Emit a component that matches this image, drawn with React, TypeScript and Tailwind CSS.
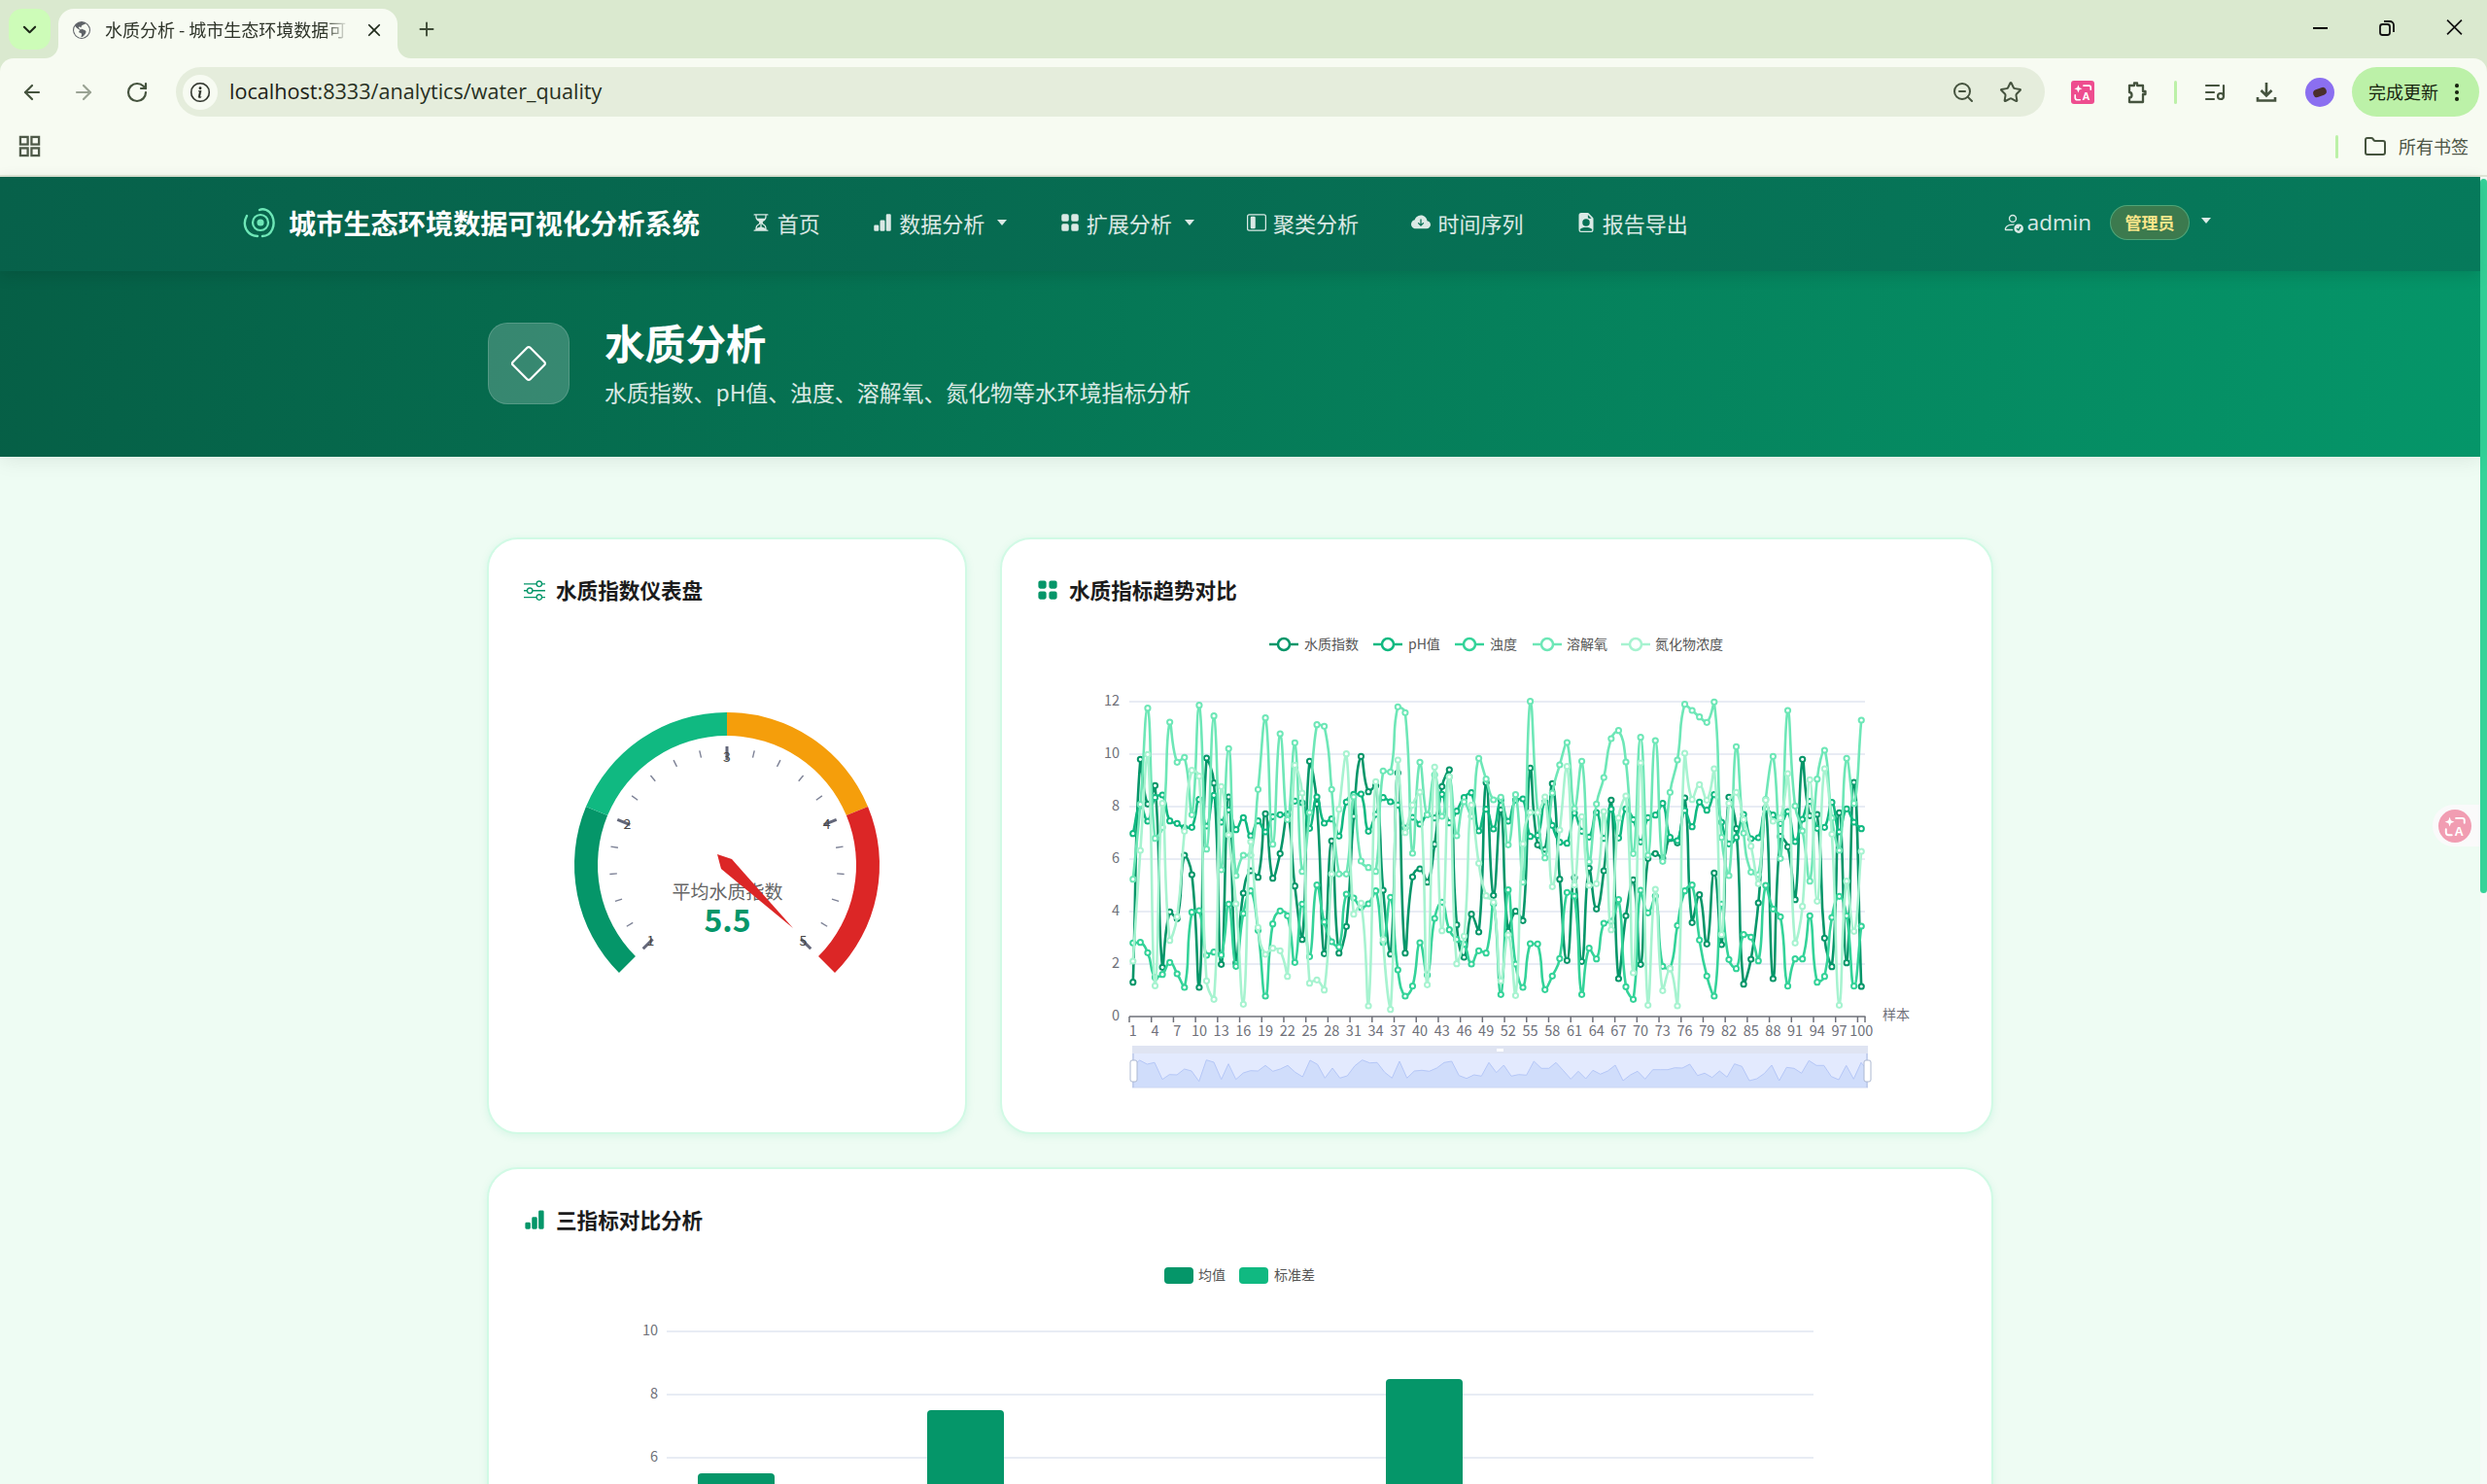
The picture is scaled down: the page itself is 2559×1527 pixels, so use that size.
import React from "react";
import {
  BsHourglassSplit, BsBarChartFill, BsGridFill, BsLayoutSidebarInset, BsCloudArrowDownFill,
  BsFileEarmarkPersonFill, BsPersonCheck, BsDiamond, BsSliders, BsGlobeAmericas, BsChevronDown,
  BsX, BsPlus, BsInfoCircle, BsThreeDotsVertical,
} from "react-icons/bs";
import { ArrowLeft, ArrowRight, RotateCw, ZoomOut, Star, ListMusic, Folder } from "lucide-react";

const S1 = [902,214,352,295,856,685,706,510,570,918,210,287,847,330,842,627,558,578,382,581,505,383,605,770,220,352,814,466,812,730,390,205,314,295,618,815,256,812,577,552,593,476,298,246,725,825,692,747,286,634,370,745,683,712,241,478,492,289,584,835,579,838,550,676,558,340,891,697,586,847,520,505,519,458,472,333,718,632,784,565,786,331,428,908,831,657,365,891,452,484,647,214,388,384,766,854,379,842,285,915];
const S2 = [443,354,405,332,324,404,412,425,424,338,420,325,408,370,431,394,450,404,438,391,385,385,343,348,427,330,411,398,451,346,322,321,436,384,332,345,355,426,393,414,385,395,322,410,374,332,317,435,368,429,340,405,340,336,452,449,345,418,470,473,380,436,454,378,458,368,457,367,400,469,394,386,350,455,465,372,422,346,371,323,408,475,455,384,459,456,367,386,412,375,468,399,344,427,424,347,438,367,408,428];
const S3 = [781,779,811,887,878,841,876,918,686,681,819,809,818,661,853,690,620,742,945,722,682,697,841,661,823,602,716,777,793,630,642,671,660,620,780,640,864,945,914,780,880,705,655,740,770,785,846,805,812,660,940,617,846,918,783,784,925,883,829,625,636,940,797,830,720,714,647,916,955,618,688,636,853,860,727,620,602,772,883,945,661,832,860,755,763,836,603,676,700,914,830,830,697,902,884,702,637,697,914,729];
const S4 = [584,353,56,458,424,99,223,208,385,47,491,80,555,181,573,510,510,307,86,476,135,400,163,560,378,107,112,307,568,568,330,528,548,560,250,253,52,70,504,223,385,262,390,268,450,345,390,211,275,339,331,478,323,593,35,378,518,318,231,162,366,220,530,352,270,150,125,222,505,146,510,156,529,316,216,44,63,83,100,37,455,573,175,442,562,570,338,205,520,63,358,435,590,275,186,395,495,211,350,93];
const S5 = [837,495,199,913,350,773,700,436,248,266,898,955,298,447,660,970,468,733,816,797,805,884,232,318,905,895,926,568,368,197,692,658,975,283,770,986,216,440,355,315,910,238,743,268,845,760,355,535,635,655,898,756,943,475,378,378,330,607,432,236,602,391,603,598,375,740,395,327,873,225,973,615,928,860,975,195,338,292,340,243,755,350,316,400,482,598,340,405,395,258,781,668,277,652,243,445,973,590,745,498];

const seriesList = [
  { name: "水质指数", color: "#059669", data: S1 },
  { name: "pH值", color: "#10b981", data: S2 },
  { name: "浊度", color: "#34d399", data: S3 },
  { name: "溶解氧", color: "#6ee7b7", data: S4 },
  { name: "氮化物浓度", color: "#a7f3d0", data: S5 },
];

const px = (i: number) => 1165.8 + 7.57 * i;
const py = (zy: number) => 710 + zy / 3;

function smoothPath(pts: number[][]) {
  const s = 0.5;
  const cps = pts.map((p, i) => {
    const prev = pts[Math.max(0, i - 1)];
    const next = pts[Math.min(pts.length - 1, i + 1)];
    const vx = next[0] - prev[0];
    const vy = next[1] - prev[1];
    const a = Math.hypot(p[0] - prev[0], p[1] - prev[1]);
    const b = Math.hypot(next[0] - p[0], next[1] - p[1]);
    const r = a + b > 0 ? b / (a + b) : 0.5;
    const clamp = (v: number, l: number, h: number) => Math.max(Math.min(l, h), Math.min(Math.max(l, h), v));
    const inP = [p[0] - vx * s * (1 - r), clamp(p[1] - vy * s * (1 - r), p[1], prev[1])];
    const outP = [p[0] + vx * s * r, clamp(p[1] + vy * s * r, p[1], next[1])];
    return { inP, outP };
  });
  let d = `M${pts[0][0].toFixed(1)} ${pts[0][1].toFixed(1)}`;
  for (let i = 1; i < pts.length; i++) {
    const a = cps[i - 1].outP;
    const b = cps[i].inP;
    d += `C${a[0].toFixed(1)} ${a[1].toFixed(1)} ${b[0].toFixed(1)} ${b[1].toFixed(1)} ${pts[i][0].toFixed(1)} ${pts[i][1].toFixed(1)}`;
  }
  return d;
}

const mini7 = [[196,590],[218,573],[241,585],[264,580],[288,632],[310,617],[333,618],[356,600],[378,606],[401,638],[424,572],[447,579],[470,632],[492,584],[515,632],[538,612],[560,605],[583,606],[606,589],[629,607],[652,600],[675,589],[698,610],[721,624],[744,573],[767,586],[790,628],[813,597],[836,628],[859,621],[882,590],[905,572],[928,581],[951,580],[974,610],[997,628],[1020,576],[1043,628],[1066,606],[1089,604],[1112,607],[1135,597],[1158,580],[1181,576],[1204,620],[1227,629],[1250,618],[1273,622],[1296,580],[1319,611],[1342,588]];
const mini8 = [[15,622],[38,617],[62,619],[85,576],[108,598],[131,598],[153,580],[176,605],[199,631],[222,607],[245,630],[267,604],[290,616],[313,606],[336,588],[360,636],[383,618],[405,607],[428,631],[452,602],[475,602],[498,602],[520,596],[543,597],[566,585],[590,620],[612,613],[635,626],[658,606],[681,625],[704,584],[727,592],[750,636],[773,630],[796,614],[819,588],[842,636],[865,595],[888,598],[911,613],[934,574],[957,589],[980,589],[1003,623],[1026,633],[1049,589],[1072,631],[1095,580],[1111,600]];
const miniPts = [
  ...mini7.map(([x, y]) => [1100 + x / 3, 900 + y / 3]),
  ...mini8.map(([x, y]) => [1550 + x / 3, 900 + y / 3]),
];
const miniLine = miniPts.map((p, i) => `${i ? "L" : "M"}${p[0].toFixed(1)} ${p[1].toFixed(1)}`).join("");

function LineChart() {
  const ylabels = [0, 2, 4, 6, 8, 10, 12];
  const yOf = (v: number) => 1046 - v * 27;
  const xlabels: number[] = [];
  for (let i = 0; i < 100; i += 3) xlabels.push(i);
  return (
    <svg viewBox="1031 640 1018 525" className="block w-[1018px] h-[525px]" fill="none">
      {[
        { x: 1306, tx: 1342, s: seriesList[0] },
        { x: 1413, tx: 1449, s: seriesList[1] },
        { x: 1497, tx: 1533, s: seriesList[2] },
        { x: 1577, tx: 1612, s: seriesList[3] },
        { x: 1668, tx: 1703, s: seriesList[4] },
      ].map(({ x, tx, s }) => (
        <g key={s.name}>
          <line x1={x} x2={x + 30} y1={663} y2={663} stroke={s.color} strokeWidth={2.5} />
          <circle cx={x + 15} cy={663} r={6} fill="#fff" stroke={s.color} strokeWidth={2.5} />
          <text x={tx} y={668} fontSize={14} fill="#555">{s.name}</text>
        </g>
      ))}
      {ylabels.map((v) => (
        <g key={v}>
          {v > 0 && <line x1={1162} x2={1919} y1={yOf(v)} y2={yOf(v)} stroke="#e0e6f1" strokeWidth={1.5} />}
          <text x={1152} y={yOf(v) + 3.5} textAnchor="end" fontSize={14.5} fill="#6e7079">{v}</text>
        </g>
      ))}
      <line x1={1162} x2={1919.5} y1={1046} y2={1046} stroke="#6e7079" strokeWidth={1.5} />
      {xlabels.map((i) => (
        <g key={i}>
          <line x1={1162 + 7.57 * i} x2={1162 + 7.57 * i} y1={1046} y2={1052} stroke="#6e7079" strokeWidth={1.5} />
          <text x={px(i)} y={1066} textAnchor="middle" fontSize={14.5} fill="#6e7079">{i + 1}</text>
        </g>
      ))}
      <line x1={1919} x2={1919} y1={1046} y2={1052} stroke="#6e7079" strokeWidth={1.5} />
      <text x={1937} y={1049} fontSize={14} fill="#6e7079">样本</text>
      {seriesList.map((s) => {
        const pts = s.data.map((v, i) => [px(i), py(v)]);
        return (
          <g key={s.name}>
            <path d={smoothPath(pts)} stroke={s.color} strokeWidth={2.6} strokeLinejoin="round" />
            {pts.map((p, i) => (
              <circle key={i} cx={p[0]} cy={p[1]} r={2.6} fill="#fff" stroke={s.color} strokeWidth={2} />
            ))}
          </g>
        );
      })}
      <rect x={1165} y={1076} width={757} height={43} fill="#e3eafe" />
      <rect x={1165} y={1076} width={757} height={8} fill="#dfe4f2" />
      <path d={`M1165 1119L${miniPts[0][0]} ${miniPts[0][1]}${miniLine.replace(/^M[^L]*/, "")}L1922 1119Z`} fill="#d0ddfb" />
      <path d={miniLine} stroke="#b5c7f7" strokeWidth={1} />
      <line x1={1165} x2={1922} y1={1119} y2={1119} stroke="#ccd6f2" strokeWidth={1} />
      <line x1={1166} x2={1166} y1={1084} y2={1119} stroke="#bcc8e8" strokeWidth={1.5} />
      <line x1={1921} x2={1921} y1={1084} y2={1119} stroke="#bcc8e8" strokeWidth={1.5} />
      <rect x={1163} y={1091} width={7} height={22} rx={2} fill="#fff" stroke="#acb8d1" strokeWidth={1} />
      <rect x={1918} y={1091} width={7} height={22} rx={2} fill="#fff" stroke="#acb8d1" strokeWidth={1} />
      <rect x={1540} y={1079} width={7} height={3} fill="#fff" />
    </svg>
  );
}

function Gauge() {
  const cx = 748;
  const cy = 890;
  const pt = (r: number, a: number) => {
    const t = (a * Math.PI) / 180;
    return [cx + r * Math.cos(t), cy - r * Math.sin(t)];
  };
  const arc = (a0: number, a1: number) => {
    const R = 157;
    const r = 133;
    const p0 = pt(R, a0);
    const p1 = pt(R, a1);
    const p2 = pt(r, a1);
    const p3 = pt(r, a0);
    return `M${p0[0]} ${p0[1]}A${R} ${R} 0 0 1 ${p1[0]} ${p1[1]}L${p2[0]} ${p2[1]}A${r} ${r} 0 0 0 ${p3[0]} ${p3[1]}Z`;
  };
  const ticks: React.ReactNode[] = [];
  for (let i = 0; i <= 20; i++) {
    const a = 225 - i * 13.5;
    const major = i % 5 === 0;
    const p0 = pt(major ? 122 : 121, a);
    const p1 = pt(major ? 108 : 113.5, a);
    ticks.push(
      <line key={i} x1={p0[0]} y1={p0[1]} x2={p1[0]} y2={p1[1]} stroke={major ? "#63677a" : "#7d8296"} strokeWidth={major ? 3 : 1.4} />
    );
  }
  const labels = [1, 2, 3, 4, 5].map((v, i) => {
    const p = pt(111, 225 - i * 67.5);
    return (
      <text key={v} x={p[0]} y={p[1] + 5} textAnchor="middle" fontSize={14} fill="#464646">{v}</text>
    );
  });
  return (
    <svg viewBox="503 640 490 525" className="block w-[490px] h-[525px]" fill="none">
      <path d={arc(225, 157.5)} fill="#059669" />
      <path d={arc(157.5, 90)} fill="#10b981" />
      <path d={arc(90, 22.5)} fill="#f59e0b" />
      <path d={arc(22.5, -45)} fill="#dc2626" />
      {ticks}
      {labels}
      <text x={748.5} y={925} textAnchor="middle" fontSize={19} fill="#666">平均水质指数</text>
      <text x={748.5} y={959} textAnchor="middle" fontSize={32} fontWeight={700} fill="#059669">5.5</text>
      <polygon points="738,879 753,884 816,955 742,894" fill="#dc2626" />
    </svg>
  );
}

function BarChart() {
  const yOf = (v: number) => 1370 + (10 - v) * 32.5;
  const bars = [
    [718, 1516],
    [954, 1451],
    [1426, 1419],
  ];
  return (
    <svg viewBox="503 1288 1546 330" className="block w-[1546px] h-[330px]" fill="none">
      <rect x={1198} y={1304} width={30} height={17} rx={4} fill="#059669" />
      <text x={1233} y={1317} fontSize={14} fill="#555">均值</text>
      <rect x={1275} y={1304} width={30} height={17} rx={4} fill="#10b981" />
      <text x={1311} y={1317} fontSize={14} fill="#555">标准差</text>
      {[10, 8, 6].map((v) => (
        <g key={v}>
          <line x1={686} x2={1866} y1={yOf(v)} y2={yOf(v)} stroke="#e0e6f1" strokeWidth={1.5} />
          <text x={677} y={yOf(v) + 3.5} textAnchor="end" fontSize={14.5} fill="#6e7079">{v}</text>
        </g>
      ))}
      {bars.map(([x, y]) => (
        <path key={x} d={`M${x} 1620V${y + 4}Q${x} ${y} ${x + 4} ${y}H${x + 75}Q${x + 79} ${y} ${x + 79} ${y + 4}V1620Z`} fill="#059669" />
      ))}
    </svg>
  );
}

function Card({ icon, title, className, children }: { icon: React.ReactNode; title: string; className: string; children: React.ReactNode }) {
  return (
    <section className={`bg-white rounded-[32px] border-2 border-[#d1fae5] shadow-[0_2px_8px_rgba(16,185,129,0.1)] ${className}`}>
      <header className="flex items-center h-[30px] mt-[37px] ml-[35px] mb-[18px]">
        <span className="w-[24px] flex items-center justify-center text-[#059669] text-[22px]">{icon}</span>
        <h2 className="ml-[10px] text-[21.6px] leading-[30px] font-bold text-[#1c1c1c]">{title}</h2>
      </header>
      {children}
    </section>
  );
}

function NavItem({ icon, label, caret }: { icon: React.ReactNode; label: string; caret?: boolean }) {
  return (
    <a className="flex items-center text-[22px] leading-[30px] text-white/85">
      <span className="w-[20px] flex justify-center text-[20px] mr-[7px]">{icon}</span>
      <span>{label}</span>
      {caret && <span className="ml-[13px] w-0 h-0 border-x-[5px] border-x-transparent border-t-[6px] border-t-white/85" />}
    </a>
  );
}

function TranslateMark({ color, className }: { color: string; className: string }) {
  return (
    <svg viewBox="0 0 24 24" className={className}>
      <path d="M7 3.5l1.2 3.3 3.3 1.2-3.3 1.2L7 12.5 5.8 9.2 2.5 8l3.3-1.2z" fill={color} />
      <path d="M13 4.5h6a2 2 0 0 1 2 2v2.5M3.5 15v3a2.5 2.5 0 0 0 2.5 2.5h3" fill="none" stroke={color} strokeWidth="1.8" strokeLinecap="round" />
      <text x="11.5" y="21" fontSize="12" fontWeight="700" fill={color} fontFamily="Liberation Sans, sans-serif">A</text>
    </svg>
  );
}

export default function App() {
  const darkIcon = "w-[24px] h-[24px] text-[#45533e] shrink-0";
  return (
    <div className="relative w-[2559px] h-[1527px] overflow-hidden flex flex-col bg-[#dae9cf] font-['Noto_Sans_CJK_SC','Noto_Sans',sans-serif]">
      {/* tab strip */}
      <div className="h-[60px] shrink-0 flex items-end relative">
        <div className="absolute left-[9px] top-[9px] w-[43px] h-[42px] rounded-[14px] bg-[#cdfcb8] flex items-center justify-center text-[#1f2a1a] text-[15px]">
          <BsChevronDown className="stroke-[1.2px]" />
        </div>
        <div className="ml-[60px] w-[349px] h-[51px] pb-[8px] rounded-t-[16px] bg-[#f7fbf2] flex items-center relative">
          <svg viewBox="0 0 14 14" className="absolute -left-[14px] bottom-0 w-[14px] h-[14px]"><path d="M14 0v14H0c8 0 14-6 14-14z" fill="#f7fbf2" /></svg>
          <svg viewBox="0 0 14 14" className="absolute -right-[14px] bottom-0 w-[14px] h-[14px]"><path d="M0 0v14h14C6 14 0 8 0 0z" fill="#f7fbf2" /></svg>
          <BsGlobeAmericas className="ml-[15px] w-[18px] text-[18px] text-[#5f6368]" />
          <span className="ml-[15px] w-[251px] overflow-hidden whitespace-nowrap text-[18px] text-[#2d3328] [mask-image:linear-gradient(90deg,#000_90%,transparent)]">水质分析 - 城市生态环境数据可</span>
          <BsX className="ml-[12px] text-[28px] text-[#1f2a1a]" />
        </div>
        <BsPlus className="ml-[15px] mb-[15px] text-[30px] text-[#3d4a36]" />
        <div className="ml-auto h-full flex items-start pt-[17px] pr-[25px] text-[#111]">
          <span className="w-[15px] h-[2px] bg-black mt-[11px] mr-[52px]" />
          <svg viewBox="0 0 18 18" className="w-[18px] h-[22px] mr-[52px] mt-[1px]" fill="none" stroke="#111" strokeWidth="1.8">
            <rect x="2" y="5" width="10" height="11" rx="2.5" />
            <path d="M6 2h6a4 4 0 0 1 4 4v7" />
          </svg>
          <svg viewBox="0 0 16 16" className="w-[17px] h-[22px]" fill="none" stroke="#111" strokeWidth="1.6">
            <path d="M1 1l14 14M15 1L1 15" />
          </svg>
        </div>
      </div>
      {/* toolbar */}
      <div className="h-[69px] shrink-0 bg-[#f7fbf2] rounded-t-[14px] pt-[9px]">
        <div className="h-[51px] flex items-center">
          <ArrowLeft className={`ml-[21px] ${darkIcon}`} strokeWidth={2.2} />
          <ArrowRight className="ml-[29px] w-[24px] h-[24px] text-[#9aa394]" strokeWidth={2.2} />
          <RotateCw className={`ml-[31px] ${darkIcon}`} strokeWidth={2.2} />
          <div className="ml-[28px] w-[1923px] h-[51px] rounded-full bg-[#e5eddc] flex items-center">
            <span className="ml-[7px] w-[36px] h-[36px] rounded-full bg-[#f7fbf2] flex items-center justify-center">
              <BsInfoCircle className="text-[20px] text-[#252a22] stroke-[0.3px]" />
            </span>
            <span className="ml-[12px] text-[21.6px] text-[#27301f] font-['Open_Sans',sans-serif]">
              <span className="text-[#1c2118]">localhost</span>:8333/analytics/water_quality
            </span>
            <ZoomOut className={`ml-auto ${darkIcon}`} strokeWidth={2} />
            <Star className={`ml-[25px] mr-[23px] ${darkIcon}`} strokeWidth={2} />
          </div>
          <div className="ml-[27px] w-[24px] h-[24px] rounded-[3px] bg-[#ee4d8f] flex items-center justify-center">
            <TranslateMark color="#fff" className="w-[22px] h-[22px]" />
          </div>
          <svg viewBox="0 0 24 24" className="ml-[32px] w-[24px] h-[26px]" fill="none" stroke="#45533e" strokeWidth="2.3">
            <path d="M4 5h5V2.5h3V5h6v6h2.5v3H18v8H4v-4.5c2 0 2.5-1 2.5-2.5S6 12 4 12z" strokeLinejoin="round" />
          </svg>
          <span className="ml-[26px] w-[3px] h-[24px] rounded bg-[#bcf1a8]" />
          <ListMusic className={`ml-[27px] ${darkIcon}`} strokeWidth={2.2} />
          <svg viewBox="0 0 24 24" className="ml-[29px] w-[24px] h-[24px]" fill="none" stroke="#45533e" strokeWidth="2.6">
            <path d="M12 2v13M6.5 10l5.5 5.5 5.5-5.5" />
            <path d="M3 17v3.5h18V17" />
          </svg>
          <span className="ml-[28px] w-[30px] h-[30px] rounded-full bg-[#8b6ff0] flex items-center justify-center shrink-0">
            <span className="w-[14px] h-[8px] rounded-full bg-[#4a2f2c] -rotate-[20deg]" />
          </span>
          <div className="ml-[18px] w-[131px] h-[51px] rounded-full bg-[#bcf1a8] flex items-center pl-[17px] text-[18px] text-[#17240f] shrink-0">
            <span>完成更新</span>
            <BsThreeDotsVertical className="ml-[8px] text-[22px] text-[#17240f]" />
          </div>
        </div>
      </div>
      {/* bookmarks */}
      <div className="h-[53px] shrink-0 flex items-center bg-[#f7fbf2] border-b-2 border-[#dfe6d6] pb-[8px]">
        <svg viewBox="0 0 24 24" className="ml-[19px] w-[23px] h-[23px]" fill="none" stroke="#4f5a49" strokeWidth="2.4">
          <rect x="2" y="2" width="8" height="8" />
          <rect x="14" y="2" width="8" height="8" />
          <rect x="2" y="14" width="8" height="8" />
          <rect x="14" y="14" width="8" height="8" />
        </svg>
        <span className="ml-auto w-[3px] h-[24px] rounded bg-[#bcf1a8]" />
        <Folder className="ml-[26px] w-[24px] h-[24px] text-[#45533e]" strokeWidth={2} />
        <span className="ml-[12px] mr-[19px] text-[18px] text-[#4c5546]">所有书签</span>
      </div>
      {/* page */}
      <div className="flex-1 min-h-0 flex bg-white">
        <div className="flex-1 min-w-0 bg-[#eefcf3] flex flex-col">
          <nav className="relative z-10 h-[97px] shrink-0 flex items-center pl-[250px] pr-[277px] pb-[3px] bg-[linear-gradient(100deg,#07614a,#067a5b)] shadow-[0_4px_16px_rgba(0,0,0,0.12)]">
            <svg viewBox="0 0 36 32" className="w-[36px] h-[32px]" fill="none" stroke="#6ee7b7" strokeWidth="2.4" strokeLinecap="round">
              <path d="M4 9c-5 9-1 20 11 21M20 30c10 0 14-12 10-21-3-6-9-8-13-6" />
              <circle cx="18" cy="16" r="8" strokeWidth="2.2" />
              <circle cx="18" cy="16" r="3.6" fill="#6ee7b7" stroke="none" />
            </svg>
            <span className="ml-[11px] text-[28.2px] leading-[36px] font-bold text-white">城市生态环境数据可视化分析系统</span>
            <div className="ml-[53px] flex items-center gap-[54.4px]">
              <NavItem icon={<BsHourglassSplit />} label="首页" />
              <NavItem icon={<BsBarChartFill />} label="数据分析" caret />
              <NavItem icon={<BsGridFill />} label="扩展分析" caret />
              <NavItem icon={<BsLayoutSidebarInset />} label="聚类分析" />
              <NavItem icon={<BsCloudArrowDownFill />} label="时间序列" />
              <NavItem icon={<BsFileEarmarkPersonFill />} label="报告导出" />
            </div>
            <div className="ml-auto flex items-center text-white/85">
              <BsPersonCheck className="text-[22px]" />
              <span className="ml-[4px] text-[22.4px] leading-[30px] font-['Open_Sans',sans-serif]">admin</span>
              <span className="ml-[19px] w-[82px] h-[36px] rounded-full bg-[#3c7a4e] border border-[#6ee7b7]/40 flex items-center justify-center text-[17px] font-semibold text-[#fde68a]">管理员</span>
              <span className="ml-[12px] mb-[4px] w-0 h-0 border-x-[5px] border-x-transparent border-t-[6px] border-t-white/85" />
            </div>
          </nav>
          <div className="h-[191px] shrink-0 relative z-[5] bg-[linear-gradient(100deg,#065f46,#059669)] shadow-[0_4px_20px_rgba(0,0,0,0.08)] flex items-start">
            <div className="w-[1550px] mx-auto flex items-start pt-[53px] pl-[1px]">
              <div className="w-[84px] h-[84px] rounded-[20px] bg-white/20 border border-white/15 flex items-center justify-center">
                <BsDiamond className="text-[36px] text-white" />
              </div>
              <div className="ml-[36px] -mt-[7px]">
                <h1 className="text-[41.6px] leading-[54px] font-bold text-white">水质分析</h1>
                <p className="mt-[8px] text-[22.9px] leading-[32px] text-white/85">水质指数、pH值、浊度、溶解氧、氮化物等水环境指标分析</p>
              </div>
            </div>
          </div>
          <main className="w-[1550px] mx-auto pt-[83px]">
            <div className="flex gap-[34px]">
              <Card icon={<BsSliders />} title="水质指数仪表盘" className="w-[494px] h-[614px] shrink-0">
                <Gauge />
              </Card>
              <Card icon={<BsGridFill />} title="水质指标趋势对比" className="w-[1022px] h-[614px] shrink-0">
                <LineChart />
              </Card>
            </div>
            <Card icon={<BsBarChartFill />} title="三指标对比分析" className="mt-[34px] h-[500px]">
              <BarChart />
            </Card>
          </main>
        </div>
        <aside className="w-[7px] shrink-0 bg-[#f5fbf7]">
          <div className="mt-[2px] h-[735px] rounded-full bg-[#34d399]" />
        </aside>
      </div>
      {/* floating translate */}
      <div className="absolute left-[2503px] top-[828px] w-[49px] h-[43px] rounded-l-full bg-[#fafafa] flex items-center pl-[6px]">
        <span className="w-[34px] h-[34px] rounded-full bg-[#f19db2] flex items-center justify-center">
          <TranslateMark color="#fff" className="w-[26px] h-[26px]" />
        </span>
      </div>
    </div>
  );
}
